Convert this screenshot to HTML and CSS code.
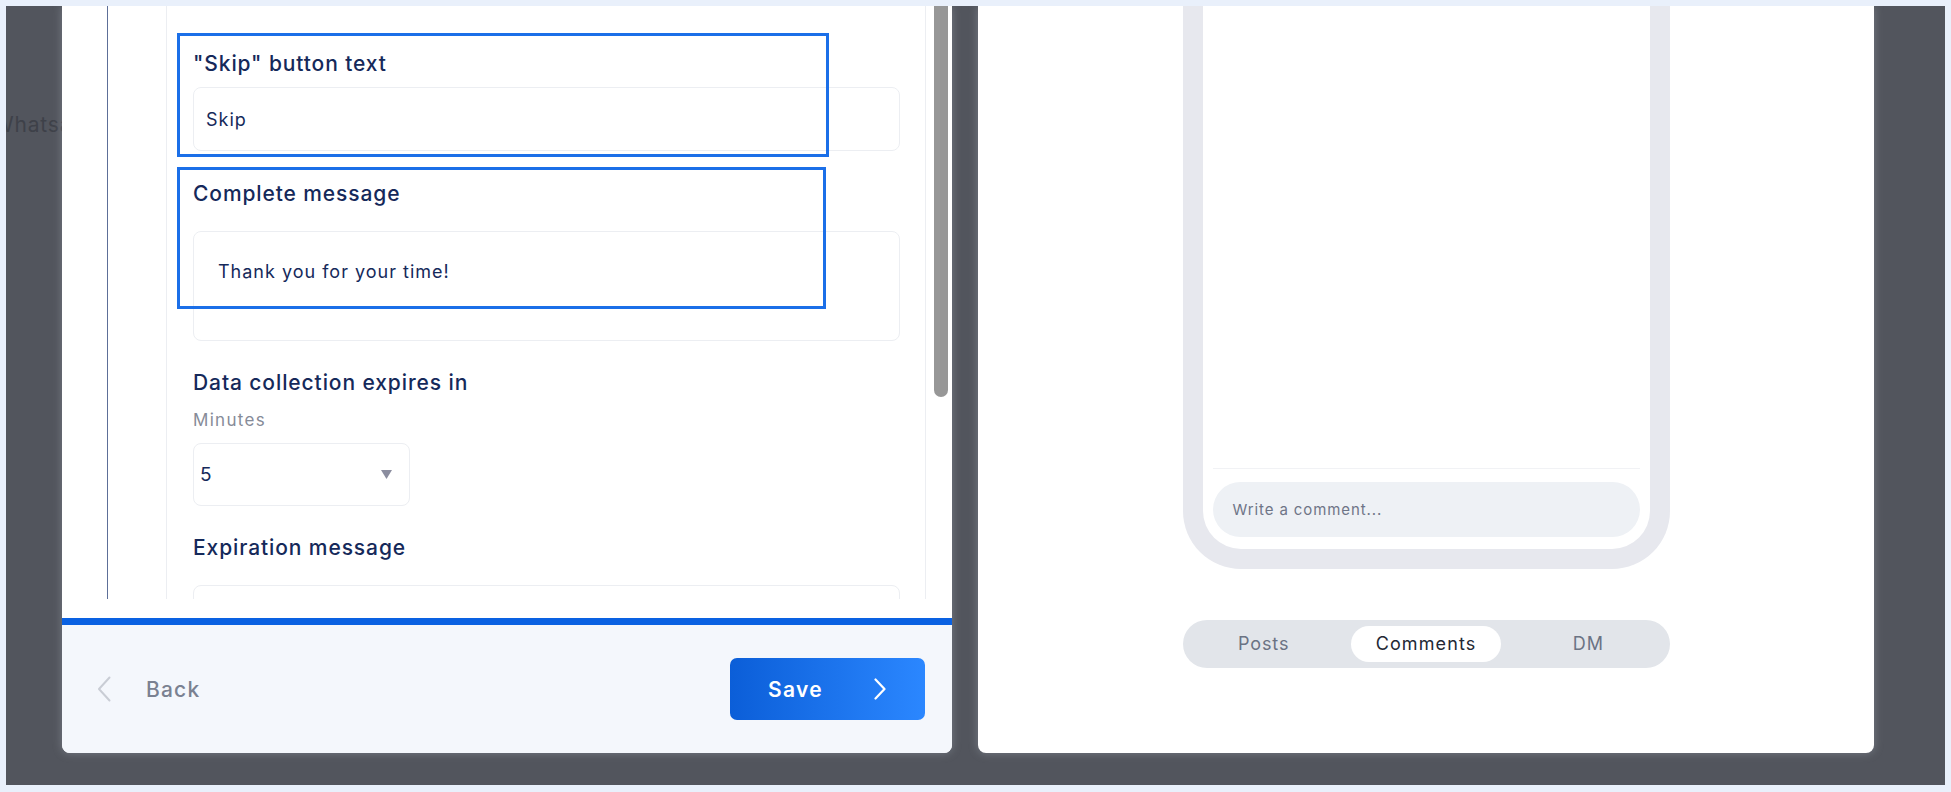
FILE: index.html
```html
<!DOCTYPE html>
<html lang="en">
<head>
    <meta charset="UTF-8">
    <title>Data collection settings</title>
    <link rel="stylesheet" href="styles.css">
</head>
<body>
<div class="backdrop">
    <!-- page text seen through the modal backdrop -->
    <div class="behind-text">Whatsapp</div>

    <!-- left: settings form -->
    <div class="panel panel-form">
        <div class="form-scroll">
            <div class="tree-line"></div>
            <div class="step-card">
                <div class="field field-first">
                    <label class="field-label" for="skipText">"Skip" button text</label>
                    <input class="text-input" type="text" id="skipText" value="Skip" readonly>
                </div>

                <div class="field">
                    <label class="field-label" for="completeMsg">Complete message</label>
                    <textarea class="text-area" id="completeMsg" readonly>Thank you for your time!</textarea>
                </div>

                <div class="field">
                    <div class="field-label label-tight">Data collection expires in</div>
                    <div class="field-hint">Minutes</div>
                    <div class="select-box">
                        <span>5</span>
                        <svg width="11" height="9" viewBox="0 0 11 9"><path d="M0 0h11L5.5 9z" fill="#8b8d9f"/></svg>
                    </div>
                </div>

                <div class="field">
                    <label class="field-label" for="expireMsg">Expiration message</label>
                    <input class="text-input" type="text" id="expireMsg" value="" readonly>
                </div>
            </div>
            <div class="scroll-thumb"></div>

            <!-- highlight frames -->
            <div class="focus-box box-skip"></div>
            <div class="focus-box box-complete"></div>
        </div>

        <div class="form-footer">
            <button class="btn-back" type="button">
                <svg width="14" height="26" viewBox="0 0 14 26"><path d="M12.5 1.5L2 13l10.5 11.5" fill="none" stroke="#c9cdd5" stroke-width="2" stroke-linecap="round" stroke-linejoin="round"/></svg>
                Back
            </button>
            <button class="btn-save" type="button">
                Save
                <svg width="12" height="22" viewBox="0 0 12 22"><path d="M1.5 1.5L10.5 11l-9 9.5" fill="none" stroke="#fff" stroke-width="2.2" stroke-linecap="round" stroke-linejoin="round"/></svg>
            </button>
        </div>
    </div>

    <!-- right: preview -->
    <div class="panel panel-preview">
        <div class="phone">
            <div class="comment-bar">
                <div class="comment-input">Write a comment...</div>
            </div>
        </div>
        <div class="preview-tabs">
            <span class="tab">Posts</span>
            <span class="tab active">Comments</span>
            <span class="tab">DM</span>
        </div>
    </div>
</div>
</body>
</html>
```

FILE: styles.css
```css
body {
    margin: 0;
    background-color: #e9f0fb;
    font-family: Inter, "Noto Sans", sans-serif;
    color: #15295a;
}

/* dark backdrop behind the modal panels */
.backdrop {
    position: relative;
    box-sizing: border-box;
    height: 779px;
    margin: 6px;
    padding-left: 56px;
    background-color: #52555d;
    display: flex;
    align-items: flex-start;
    gap: 26px;
    overflow: hidden;
}

.behind-text {
    position: absolute;
    left: -13px;
    top: 107px;
    font-size: 21px;
    line-height: 24px;
    letter-spacing: 0.8px;
    color: #3e4149;
}

.panel {
    position: relative;
    z-index: 1;
    height: 747px;
    background-color: #fff;
    border-radius: 0 0 8px 8px;
    box-shadow: 0 0 10px rgba(190, 195, 205, 0.35);
    overflow: hidden;
    display: flex;
    flex-direction: column;
}

/* left panel */
.panel-form {
    width: 890px;
}

.form-scroll {
    position: relative;
    flex: none;
    height: 593px;
    padding-left: 45px;
    display: flex;
    overflow: hidden;
}

.tree-line {
    width: 1px;
    background-color: #5d6f98;
}

.step-card {
    width: 707px;
    margin-left: 58px;
    padding: 43px 25px 0 26px;
    border-left: 1px solid #eceef2;
    border-right: 1px solid #eceef2;
}

.scroll-thumb {
    width: 14px;
    height: 391px;
    margin-left: 8px;
    background-color: #979797;
    border-radius: 0 0 7px 7px;
}

.field {
    margin-bottom: 27px;
}

.field-first {
    margin-bottom: 28px;
}

.field-label {
    display: block;
    font-size: 21px;
    line-height: 30px;
    font-weight: 500;
    letter-spacing: 0.9px;
    margin-bottom: 22px;
}

.field-first .field-label {
    margin-bottom: 8px;
}

.label-tight {
    margin-bottom: 0;
}

.field-hint {
    font-size: 17px;
    line-height: 24px;
    letter-spacing: 1.3px;
    color: #868b98;
    margin: 10px 0 11px;
}

.text-input,
.text-area {
    display: block;
    box-sizing: border-box;
    width: 100%;
    border: 1px solid #eceef2;
    border-radius: 8px;
    background-color: #fff;
    font-family: inherit;
    font-size: 18px;
    letter-spacing: 1px;
    color: #15295a;
    outline: none;
}

.text-input {
    height: 64px;
    padding: 0 12px;
}

.text-area {
    height: 110px;
    padding: 28px 24px;
    line-height: 24px;
    resize: none;
}

.select-box {
    box-sizing: border-box;
    width: 217px;
    height: 63px;
    padding: 0 17px 0 6px;
    border: 1px solid #eceef2;
    border-radius: 8px;
    display: flex;
    align-items: center;
    justify-content: space-between;
    font-size: 19px;
}

.focus-box {
    position: absolute;
    box-sizing: border-box;
    left: 115px;
    border: 3px solid #1b6fe8;
}

.box-skip {
    top: 27px;
    width: 652px;
    height: 124px;
}

.box-complete {
    top: 161px;
    width: 649px;
    height: 142px;
}

.form-footer {
    flex: 1;
    margin-top: 19px;
    border-top: 7px solid #0a61e2;
    background-color: #f4f7fc;
    padding: 0 27px 0 35px;
    display: flex;
    align-items: center;
    justify-content: space-between;
}

.btn-back {
    display: flex;
    align-items: center;
    gap: 35px;
    padding: 0;
    border: none;
    background: none;
    font-family: inherit;
    font-size: 21px;
    font-weight: 500;
    letter-spacing: 1.2px;
    color: #7a8191;
}

.btn-save {
    box-sizing: border-box;
    width: 195px;
    height: 62px;
    padding: 0 39px 0 38px;
    border: none;
    border-radius: 7px;
    background: linear-gradient(90deg, #0b5ed8, #2b87ff);
    display: flex;
    align-items: center;
    justify-content: space-between;
    font-family: inherit;
    font-size: 21px;
    font-weight: 600;
    letter-spacing: 1.3px;
    color: #fff;
}

/* right panel */
.panel-preview {
    width: 896px;
    align-items: center;
}

.phone {
    box-sizing: border-box;
    width: 487px;
    height: 563px;
    padding: 0 10px 12px;
    border: 20px solid #e7e8ee;
    border-top: none;
    border-radius: 0 0 58px 58px;
    display: flex;
    flex-direction: column;
    justify-content: flex-end;
}

.comment-bar {
    border-top: 1px solid #f1f2f5;
    padding-top: 13px;
}

.comment-input {
    height: 55px;
    line-height: 55px;
    padding-left: 20px;
    border-radius: 28px;
    background-color: #eef1f5;
    font-size: 15px;
    letter-spacing: 0.9px;
    color: #6e7587;
}

.preview-tabs {
    width: 487px;
    height: 48px;
    margin-top: 51px;
    border-radius: 24px;
    background-color: #e2e5ea;
    display: grid;
    grid-template-columns: 1fr 1fr 1fr;
    align-items: center;
    justify-items: center;
}

.tab {
    font-size: 18px;
    line-height: 36px;
    letter-spacing: 0.9px;
    color: #6b7384;
}

.tab.active {
    padding: 0 25px;
    border-radius: 18px;
    background-color: #fff;
    letter-spacing: 1.1px;
    color: #232834;
}
```
